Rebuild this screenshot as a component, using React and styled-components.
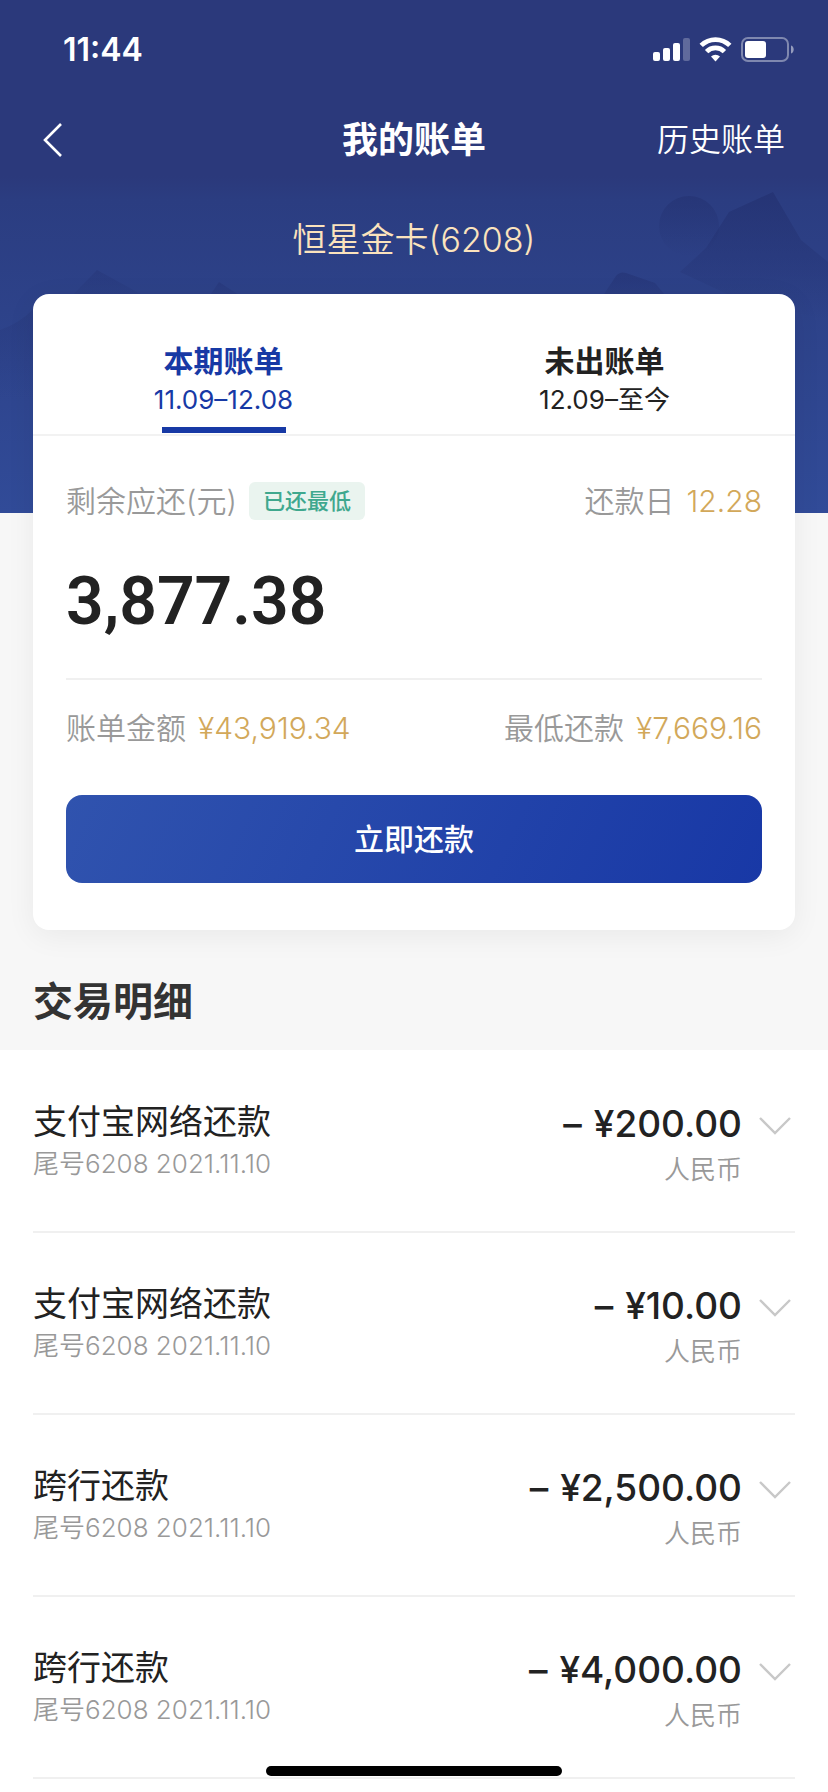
import React, { useState } from "react";
import styled, { createGlobalStyle } from "styled-components";

const tabs = [
  { id: "current", name: "本期账单", range: "11.09–12.08" },
  { id: "pending", name: "未出账单", range: "12.09–至今" },
];

const records = [
  { id: 1, name: "支付宝网络还款", info: "尾号6208 2021.11.10", amount: "¥200.00" },
  { id: 2, name: "支付宝网络还款", info: "尾号6208 2021.11.10", amount: "¥10.00" },
  { id: 3, name: "跨行还款", info: "尾号6208 2021.11.10", amount: "¥2,500.00" },
  { id: 4, name: "跨行还款", info: "尾号6208 2021.11.10", amount: "¥4,000.00" },
];

const StatusIcons = () => (
  <svg width="142" height="26" viewBox="0 0 142 26" aria-hidden="true">
    <g fill="#fff">
      <rect x="0" y="15" width="7" height="9" rx="2" />
      <rect x="10" y="11" width="7" height="13" rx="2" />
      <rect x="20" y="6" width="7" height="18" rx="2" />
      <rect x="30" y="1" width="7" height="23" rx="2" opacity="0.25" />
    </g>
    {/* wifi */}
    <g fill="none" stroke="#fff" strokeWidth="4.8">
      <path d="M48.2 8.4a20.4 20.4 0 0 1 28.6 0" />
      <path d="M53.6 14.6a12.6 12.6 0 0 1 17.8 0" />
    </g>
    <path d="M58 19.6a6.6 6.6 0 0 1 9 0L62.5 24.4z" fill="#fff" />
    {/* battery */}
    <rect x="89" y="1" width="46" height="23" rx="6" fill="none" stroke="#fff" strokeOpacity="0.4" strokeWidth="2" />
    <rect x="92" y="4" width="21" height="17" rx="3" fill="#fff" />
    <path d="M138 8.5c3.6 1 3.6 7 0 8z" fill="#fff" fillOpacity="0.5" />
  </svg>
);

const Scenery = () => (
  <HeroArt viewBox="0 0 828 513" preserveAspectRatio="xMidYMin slice" aria-hidden="true">
    <defs>
      <linearGradient id="fade" x1="0" y1="0" x2="0" y2="1">
        <stop offset="0" stopColor="#222f6e" stopOpacity="0.6" />
        <stop offset="1" stopColor="#222f6e" stopOpacity="0" />
      </linearGradient>
    </defs>
    <g fill="url(#fade)">
      <circle cx="689" cy="226" r="30" opacity="0.8" />
      <path d="M680 272L706 248L729 212L773 192L801 240L828 262V320L740 300z" />
      <path d="M588 318L616 276Q620 271 626 273L655 283L684 318z" opacity="0.8" />
      <path d="M58 310L97 270L170 310z" opacity="0.5" />
      <path d="M200 310L219 282L262 310z" opacity="0.6" />
      <path d="M0 330Q22 322 34 308V400H0z" opacity="0.4" />
    </g>
  </HeroArt>
);

const App = () => {
  const [active, setActive] = useState("current");

  return (
    <Page>
      <GlobalStyle />
      <Hero>
        <Scenery />
        <StatusBar>
          <Clock>11:44</Clock>
          <StatusIcons />
        </StatusBar>
        <NavBar>
          <BackButton type="button" aria-label="返回">
            <svg width="20" height="34" viewBox="0 0 20 34" fill="none" stroke="#fff" strokeWidth="2.6">
              <path d="M18 1L2 17L18 33" />
            </svg>
          </BackButton>
          <NavTitle>我的账单</NavTitle>
          <NavLink href="#history">历史账单</NavLink>
        </NavBar>
        <CardName>恒星金卡(6208)</CardName>
      </Hero>

      <BillCard>
        <TabList role="tablist">
          {tabs.map((tab) => (
            <Tab
              key={tab.id}
              type="button"
              role="tab"
              aria-selected={active === tab.id}
              $active={active === tab.id}
              onClick={() => setActive(tab.id)}
            >
              <TabName>{tab.name}</TabName>
              <TabRange>{tab.range}</TabRange>
              <TabLine $active={active === tab.id} />
            </Tab>
          ))}
        </TabList>
        <BillBody>
          <BillRow>
            <BillField>
              剩余应还(元)
              <Badge>已还最低</Badge>
            </BillField>
            <BillField>
              还款日 <Gold>12.28</Gold>
            </BillField>
          </BillRow>
          <Remaining>3,877.38</Remaining>
          <Divider />
          <BillRow>
            <BillField>
              账单金额 <Gold>¥43,919.34</Gold>
            </BillField>
            <BillField>
              最低还款 <Gold>¥7,669.16</Gold>
            </BillField>
          </BillRow>
          <PayButton type="button">立即还款</PayButton>
        </BillBody>
      </BillCard>

      <SectionTitle>交易明细</SectionTitle>
      <RecordList>
        {records.map((record) => (
          <Record key={record.id}>
            <RecordMain>
              <RecordName>{record.name}</RecordName>
              <RecordInfo>{record.info}</RecordInfo>
            </RecordMain>
            <RecordSide>
              <Amount>
                <span>–</span>
                <span>{record.amount}</span>
              </Amount>
              <Currency>人民币</Currency>
            </RecordSide>
            <ExpandButton type="button" aria-label="展开">
              <svg width="32" height="18" viewBox="0 0 32 18" fill="none" stroke="#c8c8c8" strokeWidth="2.4">
                <path d="M1 1L16 16L31 1" />
              </svg>
            </ExpandButton>
          </Record>
        ))}
      </RecordList>
      <HomeIndicator />
    </Page>
  );
};

const GlobalStyle = createGlobalStyle`
  * {
    box-sizing: border-box;
  }
  body {
    margin: 0;
    background: #fff;
    color: #222;
    font-family: Inter, "Noto Sans CJK SC", sans-serif;
  }
  h1, h2, p, ul {
    margin: 0;
    padding: 0;
  }
  button {
    border: 0;
    padding: 0;
    background: none;
    font-family: inherit;
    cursor: pointer;
  }
`;

const Page = styled.div`
  background: #f7f7f7;
`;

const Hero = styled.header`
  position: relative;
  padding-bottom: 219px;
  background: linear-gradient(#2b397b 0, #2b397b 176px, #2b3d81 200px, #314b98 100%);
`;

const HeroArt = styled.svg`
  position: absolute;
  inset: 0;
  width: 100%;
  height: 100%;
`;

const StatusBar = styled.div`
  position: relative;
  display: flex;
  align-items: center;
  justify-content: space-between;
  height: 99px;
  padding: 0 33px 0 63px;
`;

const Clock = styled.span`
  color: #fff;
  font-size: 32px;
  font-weight: 600;
`;

const NavBar = styled.nav`
  position: relative;
  display: grid;
  grid-template-columns: 1fr auto 1fr;
  align-items: center;
  height: 82px;
  padding: 0 43px;
  color: #fff;
  line-height: 50px;
`;

const BackButton = styled.button`
  display: flex;
  justify-self: start;
`;

const NavTitle = styled.h1`
  font-size: 36px;
  font-weight: 700;
`;

const NavLink = styled.a`
  justify-self: end;
  color: inherit;
  font-size: 32px;
  font-weight: 350;
  text-decoration: none;
`;

const CardName = styled.p`
  position: relative;
  height: 113px;
  padding-top: 34px;
  color: #fbe3bd;
  font-size: 34px;
  font-weight: 350;
  line-height: 50px;
  text-align: center;
`;

const BillCard = styled.section`
  position: relative;
  margin: -219px 33px 0;
  border-radius: 16px;
  background: #fff;
  box-shadow: 0 6px 30px rgba(0, 0, 0, 0.06);
`;

const TabList = styled.div`
  display: grid;
  grid-template-columns: 1fr 1fr;
  border-bottom: 2px solid #f2f2f2;
`;

const Tab = styled.button`
  display: flex;
  flex-direction: column;
  align-items: center;
  padding: 47px 0 1px;
  color: ${({ $active }) => ($active ? "#1739a5" : "#222")};
`;

const TabName = styled.span`
  font-size: 30px;
  font-weight: 700;
  line-height: 40px;
`;

const TabRange = styled.span`
  font-size: 26px;
  font-weight: 400;
  line-height: 38px;
`;

const TabLine = styled.span`
  width: 124px;
  height: 6px;
  margin-top: 8px;
  background: ${({ $active }) => ($active ? "#1739a5" : "transparent")};
`;

const BillBody = styled.div`
  padding: 46px 33px 47px;
`;

const BillRow = styled.div`
  display: flex;
  justify-content: space-between;
`;

const BillField = styled.p`
  display: flex;
  gap: 12px;
  color: #999;
  font-size: 30px;
  font-weight: 350;
  line-height: 38px;
`;

const Badge = styled.span`
  padding: 0 14px;
  border-radius: 6px;
  background: #eaf4ef;
  color: #3fa88e;
  font-size: 22px;
  font-weight: 500;
`;

const Gold = styled.span`
  color: #d2a85a;
`;

const Remaining = styled.p`
  margin: 42px 0 36px;
  font-family: Roboto, sans-serif;
  font-size: 66px;
  font-weight: 600;
  line-height: 80px;
`;

const Divider = styled.div`
  height: 2px;
  margin-bottom: 29px;
  background: #f0f0f0;
`;

const PayButton = styled.button`
  width: 100%;
  margin-top: 48px;
  border-radius: 16px;
  background: linear-gradient(115deg, #3053ae, #1838a6);
  color: #fff;
  font-size: 30px;
  font-weight: 500;
  line-height: 88px;
`;

const SectionTitle = styled.h2`
  padding: 44px 33px 20px;
  color: #333;
  font-size: 40px;
  font-weight: 700;
  line-height: 56px;
`;

const RecordList = styled.ul`
  padding: 1px 33px 12px;
  background: #fff;
  list-style: none;
`;

const Record = styled.li`
  display: flex;
  height: 182px;
  padding-top: 50px;
  border-bottom: 2px solid #f0f0f0;
`;

const RecordMain = styled.div`
  flex: 1;
`;

const RecordName = styled.p`
  font-size: 34px;
  font-weight: 400;
  line-height: 42px;
`;

const RecordInfo = styled.p`
  color: #999;
  font-size: 26px;
  font-weight: 350;
  line-height: 42px;
`;

const RecordSide = styled.div`
  text-align: right;
`;

const Amount = styled.p`
  display: flex;
  justify-content: flex-end;
  gap: 12px;
  font-size: 37px;
  font-weight: 500;
  line-height: 46px;
`;

const Currency = styled.p`
  color: #999;
  font-size: 26px;
  font-weight: 350;
  line-height: 46px;
`;

const ExpandButton = styled.button`
  display: flex;
  align-items: center;
  height: 50px;
  margin: 0 4px 0 17px;
`;

const HomeIndicator = styled.div`
  position: fixed;
  bottom: 16px;
  left: 50%;
  width: 296px;
  height: 10px;
  margin-left: -148px;
  border-radius: 5px;
  background: #000;
`;

export default App;
